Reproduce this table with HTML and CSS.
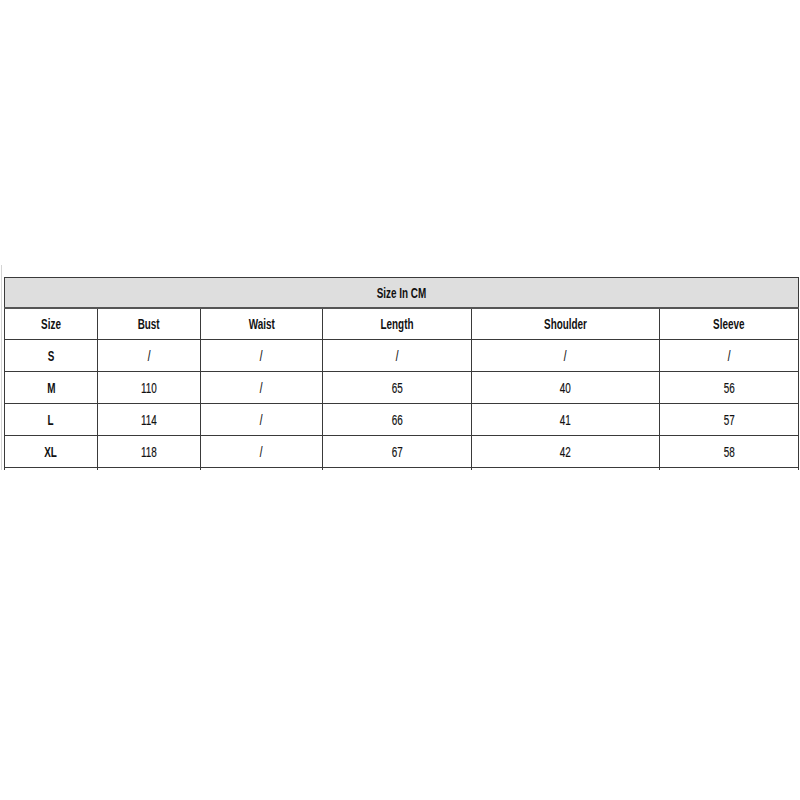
FILE: index.html
```html
<!DOCTYPE html>
<html>
<head>
<meta charset="utf-8">
<link rel="stylesheet" href="styles.css">
</head>
<body>
<div class="page">
  <div class="frame">
    <table class="sizes">
      <colgroup>
        <col class="c1"><col class="c2"><col class="c3"><col class="c4"><col class="c5"><col class="c6">
      </colgroup>
      <tr class="title"><td colspan="6"><span>Size In CM</span></td></tr>
      <tr class="head"><td><span>Size</span></td><td><span>Bust</span></td><td><span>Waist</span></td><td><span>Length</span></td><td><span>Shoulder</span></td><td><span>Sleeve</span></td></tr>
      <tr class="row"><td class="sz"><span>S</span></td><td><span>/</span></td><td><span>/</span></td><td><span>/</span></td><td><span>/</span></td><td><span>/</span></td></tr>
      <tr class="row"><td class="sz"><span>M</span></td><td><span>110</span></td><td><span>/</span></td><td><span>65</span></td><td><span>40</span></td><td><span>56</span></td></tr>
      <tr class="row"><td class="sz"><span>L</span></td><td><span>114</span></td><td><span>/</span></td><td><span>66</span></td><td><span>41</span></td><td><span>57</span></td></tr>
      <tr class="row"><td class="sz"><span>XL</span></td><td><span>118</span></td><td><span>/</span></td><td><span>67</span></td><td><span>42</span></td><td><span>58</span></td></tr>
      <tr class="tail"><td></td><td></td><td></td><td></td><td></td><td></td></tr>
    </table>
  </div>
</div>
</body>
</html>
```

FILE: styles.css
```css
html, body {
  margin: 0;
  padding: 0;
  background: #ffffff;
}
.page {
  width: 800px;
  height: 800px;
  padding-top: 265px;
  box-sizing: border-box;
}
.frame {
  margin-left: 1px;
  border-left: 1px solid #d4d4d4;
  padding: 12px 0 0 2px;
  width: 795px;
}
.sizes {
  border-collapse: collapse;
  table-layout: fixed;
  width: 794px;
  font-family: "Liberation Sans", Arial, sans-serif;
  font-weight: bold;
  font-size: 15px;
  color: #111111;
}
.c1 { width: 93px; }
.c2 { width: 103px; }
.c3 { width: 122px; }
.c4 { width: 149px; }
.c5 { width: 188px; }
.c6 { width: 139px; }
.sizes td {
  border: 1px solid #3a3a3a;
  text-align: center;
  vertical-align: middle;
  height: 32px;
  padding: 0;
  box-sizing: border-box;
}
.sizes td span {
  display: inline-block;
  transform: scaleX(0.66);
  white-space: nowrap;
}
.row td:not(.sz) {
  font-weight: normal;
  -webkit-text-stroke: 0.2px #111111;
}
.title td {
  background: #dedede;
  height: 30px;
  border-bottom: 2px solid #555555;
}
.head td {
  height: 32px;
}
.tail td {
  height: 2px;
  border-bottom: none;
}
```
